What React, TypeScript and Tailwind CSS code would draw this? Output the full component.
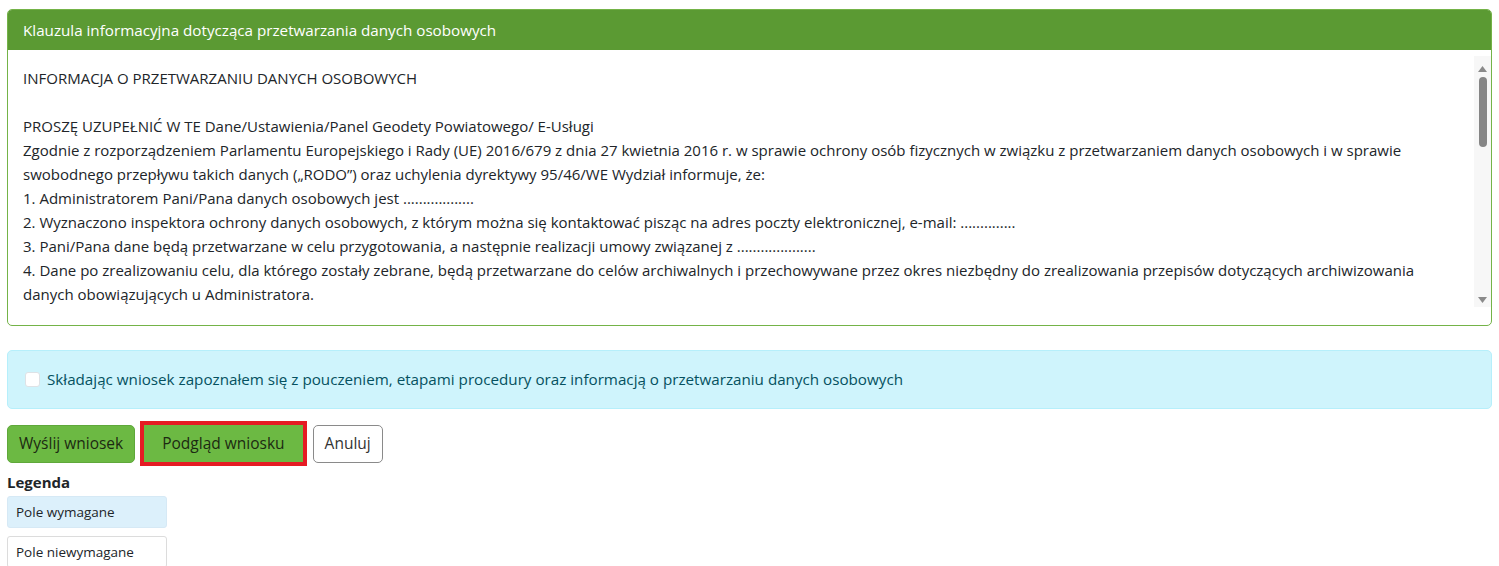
import { useState } from "react";

// Formularz wniosku: klauzula RODO + akceptacja + przyciski + legenda.

const FONT = "font-['Open_Sans','Noto_Sans',sans-serif]";

const lines: string[] = [
  "INFORMACJA O PRZETWARZANIU DANYCH OSOBOWYCH",
  "",
  "PROSZĘ UZUPEŁNIĆ W TE Dane/Ustawienia/Panel Geodety Powiatowego/ E-Usługi",
  "Zgodnie z rozporządzeniem Parlamentu Europejskiego i Rady (UE) 2016/679 z dnia 27 kwietnia 2016 r. w sprawie ochrony osób fizycznych w związku z przetwarzaniem danych osobowych i w sprawie",
  "swobodnego przepływu takich danych („RODO”) oraz uchylenia dyrektywy 95/46/WE Wydział informuje, że:",
  "1. Administratorem Pani/Pana danych osobowych jest ..................",
  "2. Wyznaczono inspektora ochrony danych osobowych, z którym można się kontaktować pisząc na adres poczty elektronicznej, e-mail: ..............",
  "3. Pani/Pana dane będą przetwarzane w celu przygotowania, a następnie realizacji umowy związanej z ....................",
  "4. Dane po zrealizowaniu celu, dla którego zostały zebrane, będą przetwarzane do celów archiwalnych i przechowywane przez okres niezbędny do zrealizowania przepisów dotyczących archiwizowania",
  "danych obowiązujących u Administratora.",
];

function FakeScrollbar() {
  return (
    <div className="mb-[18px] mt-[6px] flex w-[17px] shrink-0 flex-col items-center bg-[#f7f7f7] pt-[8px]">
      <svg width="9" height="6" viewBox="0 0 9 6" className="mt-[2px]">
        <polygon points="4.5,0 9,6 0,6" fill="#8a8a8a" />
      </svg>
      <div className="mt-[5px] h-[70px] w-[8px] rounded-full bg-[#868686]" />
      <div className="flex-1" />
      <svg width="9" height="6" viewBox="0 0 9 6" className="mb-[4px]">
        <polygon points="0,0 9,0 4.5,6" fill="#8a8a8a" />
      </svg>
    </div>
  );
}

export default function App() {
  const [checked, setChecked] = useState(false);

  return (
    <div className={`${FONT} min-h-[566px] bg-white px-[7px] pt-[9px] text-[15px] text-[#212529]`}>
      {/* klauzula */}
      <div className="overflow-hidden rounded-[5px] border border-[#74b348]">
        <div className="flex h-[40px] items-center bg-[#5b9a33] px-[15px] text-[15.2px] text-white">
          Klauzula informacyjna dotycząca przetwarzania danych osobowych
        </div>
        <div className="flex h-[275px] overflow-hidden">
          <div className="flex-1 overflow-hidden pl-[15px] pt-[16px]">
            {lines.map((l, i) => (
              <div key={i} className="h-[24px] whitespace-nowrap leading-[24px]">
                {l || "\u00a0"}
                {i === 0 && <div className="h-[24px]" />}
              </div>
            ))}
          </div>
          <FakeScrollbar />
        </div>
      </div>

      {/* akceptacja */}
      <div className="mt-[24px] flex h-[59px] items-center gap-[7px] rounded-[5px] border border-[#b6effb] bg-[#cff4fc] px-[17px] text-[15.2px] text-[#055160]">
        <button
          type="button"
          onClick={() => setChecked(!checked)}
          className="h-[15px] w-[15px] shrink-0 rounded-[3px] border border-[#dee2e6] bg-white"
        />
        <span>Składając wniosek zapoznałem się z pouczeniem, etapami procedury oraz informacją o przetwarzaniu danych osobowych</span>
      </div>

      {/* przyciski */}
      <div className="mt-[12px] flex items-center">
        <button type="button" className="h-[38px] rounded-[5px] border border-[#5fa83a] bg-[#6cb943] px-[11px] text-[15.5px] text-[#1c2a12]">
          Wyślij wniosek
        </button>
        <button type="button" className="ml-[5px] h-[45px] border-[4px] border-[#e51b24] bg-[#6cb943] px-[18px] text-[15.5px] text-[#1c2a12]">
          Podgląd wniosku
        </button>
        <button type="button" className="ml-[6px] h-[38px] rounded-[5px] border border-[#8a8a8a] bg-white px-[11px] text-[15.5px] text-[#333]">
          Anuluj
        </button>
      </div>

      {/* legenda */}
      <div className="mt-[6px] text-[15px] font-bold leading-[20px]">Legenda</div>
      <div className="mt-[4px] flex h-[32px] w-[160px] items-center rounded-[3px] border border-[#d6e9f5] bg-[#dcf0fb] px-[8px] text-[13.5px]">
        Pole wymagane
      </div>
      <div className="mt-[8px] flex h-[32px] w-[160px] items-center rounded-[3px] border border-[#dcdcdc] bg-white px-[8px] text-[13.5px]">
        Pole niewymagane
      </div>
    </div>
  );
}
